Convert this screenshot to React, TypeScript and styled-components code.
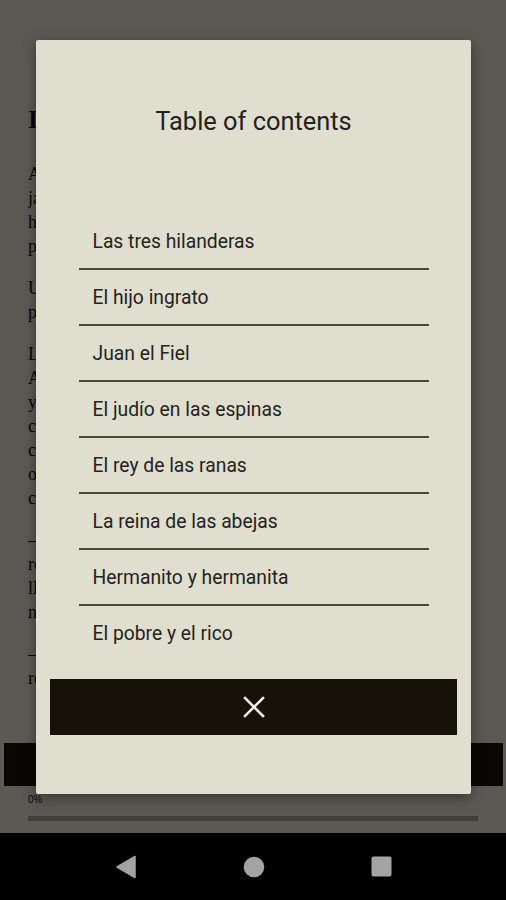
import React from 'react';
import styled, { createGlobalStyle } from 'styled-components';

const GlobalStyle = createGlobalStyle`
  html, body {
    margin: 0;
    padding: 0;
    background: #000;
  }
  * {
    box-sizing: border-box;
  }
`;

const Phone = styled.div`
  width: 506px;
  height: 900px;
  display: flex;
  flex-direction: column;
  overflow: hidden;
`;

const Screen = styled.div`
  position: relative;
  height: 833px;
  background: #e0dfcf;
  display: flex;
  flex-direction: column;
`;

const Reader = styled.div`
  flex: 1;
  overflow: hidden;
  padding: 106px 28px 0;
  font-family: 'Liberation Serif', 'DejaVu Serif', serif;
  color: #111;
`;

const Heading = styled.h1`
  margin: 0 0 28px;
  width: 400px;
  overflow: hidden;
  font-size: 26px;
  line-height: 28px;
  font-weight: bold;
  white-space: nowrap;
`;

const Paragraph = styled.div`
  margin-bottom: 18px;
`;

const Line = styled.div`
  width: 400px;
  overflow: hidden;
  font-size: 18px;
  line-height: 24px;
  white-space: nowrap;
`;

const Toolbar = styled.div`
  height: 43px;
  margin: 0 3px 0 4px;
  background: #161208;
`;

const Progress = styled.div`
  height: 47px;
  padding: 8px 28px 0 28px;
  font-family: 'Liberation Sans', Arial, sans-serif;
`;

const Percent = styled.div`
  font-size: 10px;
  line-height: 12px;
  color: #111;
`;

const Track = styled.div`
  margin-top: 10px;
  height: 5px;
  background: #9d9c90;
`;

const Overlay = styled.div`
  position: absolute;
  inset: 0;
  background: rgba(0, 0, 0, 0.6);
  display: flex;
  align-items: center;
  justify-content: center;
`;

const Dialog = styled.div`
  width: 435px;
  height: 754px;
  margin-left: 1px;
  background: #e0dfcf;
  border-radius: 2px;
  box-shadow: 0 4px 14px rgba(0, 0, 0, 0.4);
  display: flex;
  flex-direction: column;
  align-items: center;
  padding: 65px 14px 0;
  font-family: Roboto, 'Noto Sans', sans-serif;
`;

const Title = styled.h2`
  margin: 0;
  font-size: 25.4px;
  line-height: 32px;
  font-weight: 400;
  color: #222220;
`;

const Chapters = styled.ul`
  list-style: none;
  margin: 77px 0 0;
  padding: 0;
  width: 350px;
`;

const Chapter = styled.li<{ $last?: boolean }>`
  height: 56px;
  display: flex;
  align-items: center;
  padding-left: 14px;
  font-size: 19.3px;
  color: #232320;
  border-bottom: ${(p) => (p.$last ? 'none' : '2px solid #4a493e')};
  padding-top: ${(p) => (p.$last ? '0' : '2px')};
`;

const CloseButton = styled.button`
  margin-top: 17px;
  width: 100%;
  height: 56px;
  border: none;
  border-radius: 0;
  background: #161208;
  display: flex;
  align-items: center;
  justify-content: center;
  cursor: pointer;
`;

const NavBar = styled.div`
  height: 67px;
  background: #000;
  display: flex;
  align-items: center;
  justify-content: space-between;
  padding: 0 114px 0 115px;
`;

const chapters = [
  'Las tres hilanderas',
  'El hijo ingrato',
  'Juan el Fiel',
  'El judío en las espinas',
  'El rey de las ranas',
  'La reina de las abejas',
  'Hermanito y hermanita',
  'El pobre y el rico',
];

const story: string[][] = [
  [
    'Al principio había una muchacha perezosa que',
    'jamás quería hilar, y por mucho que su madre',
    'hiciera, no conseguía que trabajara. Al fin la',
    'pobre madre perdió la paciencia y le pegó.',
  ],
  [
    'Una reina que pasaba por allí oyó el llanto,',
    'preguntó a la madre por qué pegaba a su hija.',
  ],
  [
    'La madre, avergonzada de su pereza, dijo:',
    'Ay, no hay modo de apartarla del huso, siempre',
    'y a todas horas quiere hilar, y yo soy pobre',
    'cuanto lino compro se lo acaba en un día.',
    'contestó la reina: nada me gusta tanto como',
    'oír el torno cuando gira; dadme a vuestra hija,',
    'con lino de sobra podrá hilar cuanto quiera.',
  ],
  [
    '—¿Cuánto tiempo necesitas para hilar esto?',
    'respondió la muchacha, mirando las salas',
    'llenas del más hermoso lino de arriba abajo,',
    'no sabía qué hacer y lloró durante tres días.',
  ],
  ['—Si lo hilas todo, serás esposa de mi hijo,', 'repuso la reina al tercer día.'],
];

const CloseIcon = () => (
  <svg width="22" height="22" viewBox="0 0 22 22">
    <path d="M2 2 L20 20 M20 2 L2 20" stroke="#f1f0e2" strokeWidth="2.6" strokeLinecap="square" />
  </svg>
);

const BackIcon = () => (
  <svg width="22" height="24" viewBox="0 0 22 24">
    <path d="M20 1.5 L20 22.5 L2 12 Z" fill="#a3a3a3" strokeLinejoin="round" stroke="#a3a3a3" strokeWidth="1.5" />
  </svg>
);

const HomeIcon = () => (
  <svg width="22" height="22" viewBox="0 0 22 22">
    <circle cx="11" cy="11" r="10.3" fill="#a3a3a3" />
  </svg>
);

const RecentIcon = () => (
  <svg width="21" height="21" viewBox="0 0 21 21">
    <rect x="0.5" y="0.5" width="20" height="20" rx="2" fill="#a3a3a3" />
  </svg>
);

export default function App() {
  return (
    <Phone>
      <GlobalStyle />
      <Screen>
        <Reader>
          <Heading>I. Las tres hilanderas</Heading>
          {story.map((para, i) => (
            <Paragraph key={i}>
              {para.map((line, j) => (
                <Line key={j}>{line}</Line>
              ))}
            </Paragraph>
          ))}
        </Reader>
        <Toolbar />
        <Progress>
          <Percent>0%</Percent>
          <Track />
        </Progress>
        <Overlay>
          <Dialog>
            <Title>Table of contents</Title>
            <Chapters>
              {chapters.map((c, i) => (
                <Chapter key={c} $last={i === chapters.length - 1}>
                  {c}
                </Chapter>
              ))}
            </Chapters>
            <CloseButton aria-label="Close">
              <CloseIcon />
            </CloseButton>
          </Dialog>
        </Overlay>
      </Screen>
      <NavBar>
        <BackIcon />
        <HomeIcon />
        <RecentIcon />
      </NavBar>
    </Phone>
  );
}
